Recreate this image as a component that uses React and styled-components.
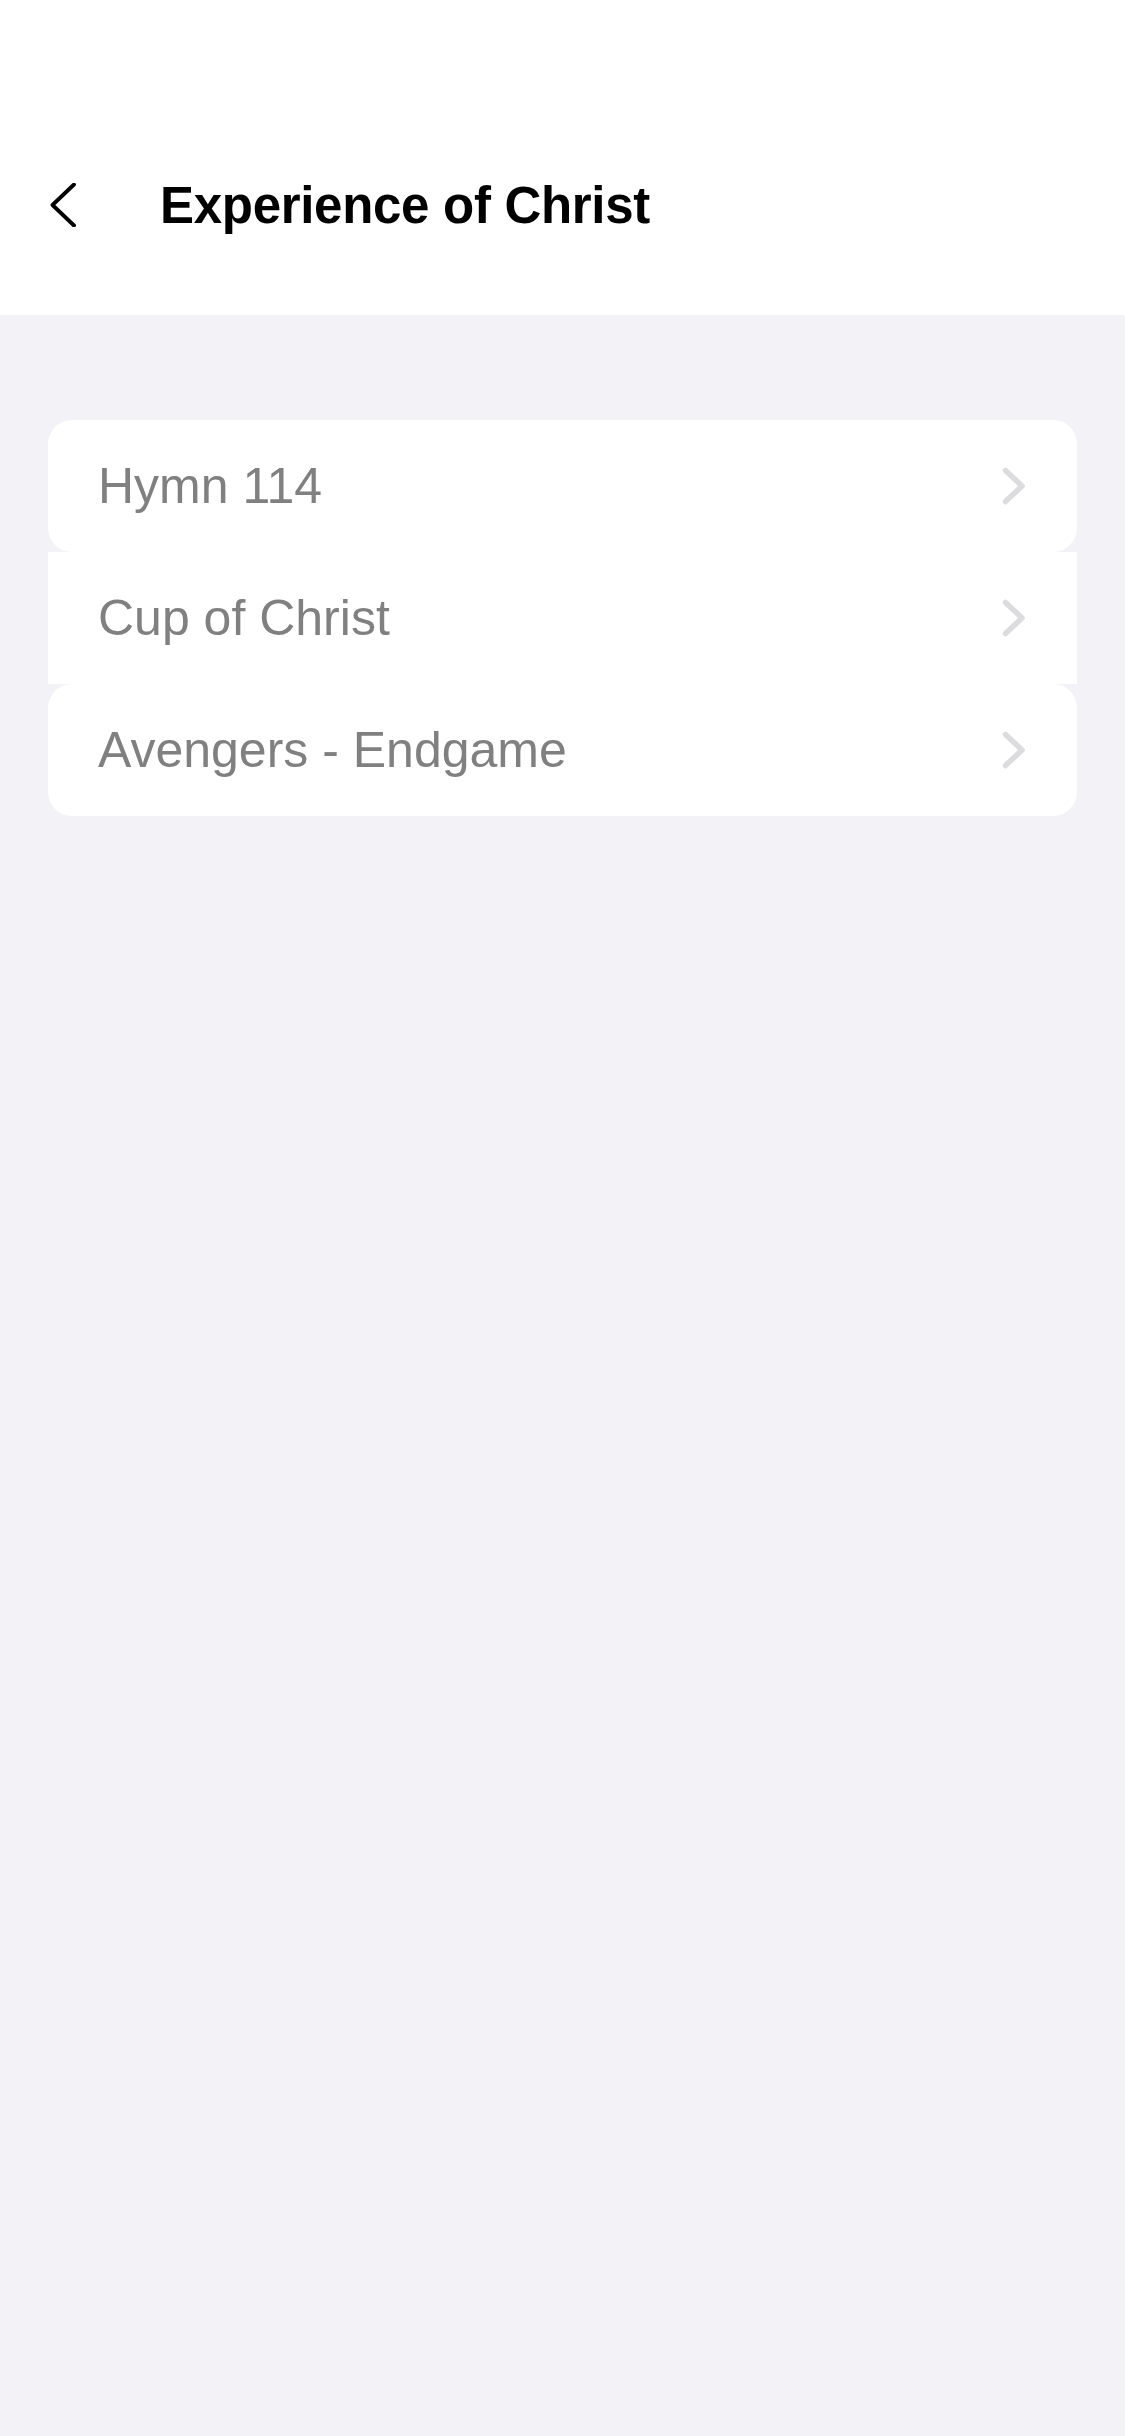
import React from "react";
import styled, { createGlobalStyle } from "styled-components";

const Global = createGlobalStyle`
  html, body { margin: 0; padding: 0; background: #f2f2f7; }
  body { font-family: "Liberation Sans", Arial, sans-serif; -webkit-font-smoothing: antialiased; }
`;

const Page = styled.div`
  min-height: 2436px;
  background: #f2f2f7;
`;

const Header = styled.header`
  height: 315px;
  box-sizing: border-box;
  background: #ffffff;
  display: flex;
  align-items: flex-end;
  padding: 0 0 80px 50px;
`;

const HeaderRow = styled.div`
  display: flex;
  align-items: center;
  height: 60px;
`;

const BackButton = styled.button`
  border: 0;
  background: none;
  padding: 0;
  width: 26px;
  height: 44px;
  display: flex;
  align-items: center;
  justify-content: center;
  cursor: pointer;
  margin-right: 84px;
`;

const Title = styled.h1`
  margin: 0;
  font-size: 51px;
  font-weight: 700;
  color: #000;
  letter-spacing: -0.3px;
`;

const List = styled.div`
  margin: 105px 48px 0;
  display: flex;
  flex-direction: column;
`;

const Row = styled.div`
  height: 132px;
  background: #fff;
  border-radius: ${(p) => (p.$rounded ? "24px" : "0")};
  display: flex;
  align-items: center;
  justify-content: space-between;
  padding: 0 51px 0 50px;
  box-sizing: border-box;
`;

const Label = styled.span`
  font-size: 50px;
  color: #808080;
  letter-spacing: 0;
`;

const Chevron = () => (
  <svg width="24" height="38" viewBox="0 0 24 38" fill="none">
    <path d="M3.5 3.5 L20 19 L3.5 34.5" stroke="#dcdcde" strokeWidth="5.5" strokeLinecap="round" strokeLinejoin="round" />
  </svg>
);

const BackIcon = () => (
  <svg width="26" height="44" viewBox="0 0 26 44" fill="none">
    <path d="M24 1.5 L2.5 22 L24 42.5" stroke="#000" strokeWidth="3.8" strokeLinecap="round" strokeLinejoin="round" />
  </svg>
);

const items = ["Hymn 114", "Cup of Christ", "Avengers - Endgame"];

export default function App() {
  return (
    <Page>
      <Global />
      <Header>
        <HeaderRow>
          <BackButton aria-label="Back">
            <BackIcon />
          </BackButton>
          <Title>Experience of Christ</Title>
        </HeaderRow>
      </Header>
      <List>
        {items.map((t, i) => (
          <Row key={t} $rounded={i !== 1}>
            <Label>{t}</Label>
            <Chevron />
          </Row>
        ))}
      </List>
    </Page>
  );
}
